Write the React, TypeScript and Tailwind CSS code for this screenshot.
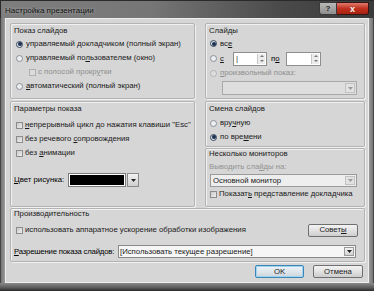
import React from "react";

function Radio({ checked, disabled, children, className = "" }: { checked?: boolean; disabled?: boolean; children?: React.ReactNode; className?: string }) {
  return (
    <div className={"flex items-center gap-[3px] whitespace-nowrap " + className}>
      <span
        className={
          "w-[7px] h-[7px] rounded-full border flex items-center justify-center shrink-0 " +
          (disabled ? "border-[#b4b4b4] bg-[#dedede]" : checked ? "border-[#3b4a5e] bg-[#d9e2ec]" : "border-[#8a8f96] bg-[#eceff2]")
        }
      >
        {checked && <span className="w-[4px] h-[4px] rounded-full bg-[#1c2f4e]" />}
      </span>
      <span className={disabled ? "text-[#8e8e8e]" : "text-[#1a1a1a]"}>{children}</span>
    </div>
  );
}

function Check({ disabled, children, className = "" }: { disabled?: boolean; children?: React.ReactNode; className?: string }) {
  return (
    <div className={"flex items-center gap-[2px] whitespace-nowrap " + className}>
      <span
        className={
          "w-[7px] h-[7px] border shrink-0 " +
          (disabled ? "border-[#b0b0b0] bg-[#dcdcdc]" : "border-[#8c8c8c] bg-[linear-gradient(135deg,#c9c9c9,#eeeeee)]")
        }
      />
      <span className={disabled ? "text-[#8e8e8e]" : "text-[#1a1a1a]"}>{children}</span>
    </div>
  );
}

function Arrow({ color = "#222" }: { color?: string }) {
  return (
    <svg width="5" height="3" viewBox="0 0 5 3">
      <path d="M0 0 H5 L2.5 3 Z" fill={color} />
    </svg>
  );
}

function DropBtn({ disabled }: { disabled?: boolean }) {
  return (
    <span
      className={
        "w-[10px] self-stretch m-[1px] flex items-center justify-center border " +
        (disabled ? "border-[#c2c2c2] bg-[#e2e2e2]" : "border-[#9a9a9a] bg-[linear-gradient(#f2f2f2,#d2d2d2)]")
      }
    >
      <Arrow color={disabled ? "#9a9a9a" : "#222"} />
    </span>
  );
}

function Spin() {
  return (
    <span className="w-[8px] self-stretch my-[1px] mr-[1px] flex flex-col border-l border-[#c8c8c8] bg-[#ececec]">
      <span className="flex-1 flex items-center justify-center">
        <svg width="4" height="2" viewBox="0 0 4 2">
          <path d="M0 2 H4 L2 0 Z" fill="#777" />
        </svg>
      </span>
      <span className="flex-1 flex items-center justify-center">
        <svg width="4" height="2" viewBox="0 0 4 2">
          <path d="M0 0 H4 L2 2 Z" fill="#777" />
        </svg>
      </span>
    </span>
  );
}

function Group({ title, className = "", children }: { title: string; className?: string; children?: React.ReactNode }) {
  return (
    <div className={"rounded-[2px] border border-[#b3b3b3] shadow-[inset_1px_1px_0_#f1f1f1,1px_1px_0_#f1f1f1] flex flex-col " + className}>
      <div className="pl-[3px] text-[#1a1a1a] whitespace-nowrap">{title}</div>
      {children}
    </div>
  );
}

export default function App() {
  return (
    <div className="w-[374px] h-[291px] overflow-hidden flex flex-col bg-[#6c6c6c] font-['Liberation_Sans',Arial,sans-serif] text-[7.75px] leading-[10px]">
      {/* title bar */}
      <div className="h-[18px] shrink-0 flex items-start bg-[linear-gradient(90deg,#7e7e7e,#767676_40%,#4a4a4a_75%,#3a3a3a)] border-t border-l border-[#2a2a2a]">
        <div className="pl-[4px] pt-[4px] text-[8px] leading-[11px] text-[#101010] whitespace-nowrap [text-shadow:0_0_3px_#bdbdbd]">Настройка презентации</div>
        <div className="ml-auto mr-[5px] mt-[1px] flex h-[13px]">
          <div className="w-[18px] h-full rounded-bl-[3px] border border-[#3a3a3a] bg-[linear-gradient(#b8b8b8,#8e8e8e)] flex items-center justify-center text-[8px] font-bold text-[#1e1e1e]">?</div>
          <div className="w-[32px] h-full rounded-br-[3px] border border-l-0 border-[#3a1414] bg-[linear-gradient(#e07a6c,#c2301f_50%,#a8220f)] flex items-center justify-center text-[9px] font-bold text-[#f4f4f4]">x</div>
        </div>
      </div>
      {/* body */}
      <div className="flex flex-1 min-h-0">
        <div className="w-[5px] shrink-0 bg-[linear-gradient(90deg,#2a2a2a,#7a7a7a_30%,#9a9a9a)]" />
        <div className="flex-1 flex flex-col border border-[#eeeeee] bg-[#d6d6d6] pt-[4px] pl-[4px] pr-[3px]">
          {/* row 1 */}
          <div className="flex gap-[10px] h-[76px]">
            <Group title="Показ слайдов" className="w-[185px] pt-[2px]">
              <div className="pl-[5px] mt-[1px] flex flex-col">
                <Radio checked className="h-[14px]">управляемый <u>д</u>окладчиком (полный экран)</Radio>
                <Radio className="h-[14px]">управляемый по<u>л</u>ьзователем (окно)</Radio>
                <Check disabled className="h-[14px] pl-[13px]">с полосой прокр<u>у</u>тки</Check>
                <Radio className="h-[14px]"><u>а</u>втоматический (полный экран)</Radio>
              </div>
            </Group>
            <Group title="Слайды" className="w-[160px] pt-[2px]">
              <div className="pl-[4px] mt-[1px] flex flex-col">
                <Radio checked className="h-[13px]">вс<u>е</u></Radio>
                <div className="flex items-center h-[15px] mt-[1px]">
                  <Radio className="w-[23px]"><u>с</u></Radio>
                  <span className="w-[34px] h-[14px] flex items-center bg-white border border-[#8e8e8e]">
                    <span className="flex-1 pl-[2px] text-[#333]">|</span>
                    <Spin />
                  </span>
                  <span className="ml-[4px] w-[15px]">п<u>о</u></span>
                  <span className="w-[35px] h-[14px] flex items-center bg-white border border-[#8e8e8e]">
                    <span className="flex-1" />
                    <Spin />
                  </span>
                </div>
                <Radio disabled className="h-[14px]"><u>п</u>роизвольный показ:</Radio>
                <div className="ml-[12px] mt-[1px] w-[135px] h-[14px] flex border border-[#a9a9a9] bg-[#dedede]">
                  <span className="flex-1" />
                  <DropBtn disabled />
                </div>
              </div>
            </Group>
          </div>
          {/* row 2 */}
          <div className="flex gap-[10px] h-[106px] mt-[2px]">
            <Group title="Параметры показа" className="w-[185px] pt-[2px]">
              <div className="pl-[5px] mt-[4px] flex flex-col">
                <Check className="h-[14px]"><u>н</u>епрерывный цикл до нажатия клавиши "Esc"</Check>
                <Check className="h-[14px]">без речевого <u>с</u>опровождения</Check>
                <Check className="h-[14px]">без <u>а</u>нимации</Check>
              </div>
              <div className="flex items-center pl-[3px] mt-[13px] h-[14px]">
                <span className="w-[54px] whitespace-nowrap"><u>Ц</u>вет рисунка:</span>
                <span className="w-[58px] h-[14px] border border-[#7c7c7c] bg-white p-[1px] flex">
                  <span className="flex-1 bg-black" />
                </span>
                <span className="ml-[1px] w-[12px] h-[14px] flex border border-[#8a8a8a] bg-[linear-gradient(#f2f2f2,#cfcfcf)] items-center justify-center">
                  <Arrow />
                </span>
              </div>
            </Group>
            <div className="w-[160px] flex flex-col gap-[1px]">
              <Group title="Смена слайдов" className="h-[46px] pt-[2px]">
                <div className="pl-[4px] mt-[2px] flex flex-col">
                  <Radio className="h-[14px]">вру<u>ч</u>ную</Radio>
                  <Radio checked className="h-[14px]">по вре<u>м</u>ени</Radio>
                </div>
              </Group>
              <Group title="Несколько мониторов" className="flex-1">
                <div className="pl-[3px] mt-[3px] h-[12px] text-[#929292] whitespace-nowrap">Выводить сла<u>й</u>ды на:</div>
                <div className="ml-[4px] w-[147px] h-[13px] flex border border-[#9a9a9a] bg-[#eeeeee]">
                  <span className="flex-1 pl-[2px] leading-[11px] text-[#1a1a1a] whitespace-nowrap">Основной монитор</span>
                  <DropBtn disabled />
                </div>
                <Check className="h-[12px] pl-[4px] mt-[1px]">Показат<u>ь</u> представление докладчика</Check>
              </Group>
            </div>
          </div>
          {/* row 3 */}
          <Group title="Производительность" className="h-[54px] mt-[1px] w-[355px]">
            <div className="flex items-center h-[14px] mt-[4px] pl-[5px] pr-[6px]">
              <Check className="flex-1">использовать аппаратное ускорение обработки изображения</Check>
              <span className="w-[50px] h-[13px] flex items-center justify-center rounded-[2px] border border-[#6f6f6f] bg-[linear-gradient(#f3f3f3,#e2e2e2_50%,#cdcdcd)] text-[#1a1a1a]">Совет<u>ы</u></span>
            </div>
            <div className="flex items-center h-[13px] mt-[8px] pl-[3px]">
              <span className="w-[104px] whitespace-nowrap tracking-[-0.2px]"><u>Р</u>азрешение показа слайдов:</span>
              <span className="w-[238px] h-[13px] flex border border-[#8a8a8a] bg-[#f6f6f6]">
                <span className="flex-1 pl-[1px] leading-[11px] text-[#1a1a1a] whitespace-nowrap">[Использовать текущее разрешение]</span>
                <DropBtn />
              </span>
            </div>
          </Group>
          {/* buttons */}
          <div className="flex justify-end gap-[9px] mt-[3px] pr-[2px]">
            <span className="w-[49px] h-[13px] flex items-center justify-center rounded-[2px] border border-[#3a86b8] shadow-[inset_0_0_0_1px_#9fd3f0] bg-[linear-gradient(#eef4f8,#dfe6eb_50%,#cbd5dc)] text-[#1a1a1a]">OK</span>
            <span className="w-[50px] h-[13px] flex items-center justify-center rounded-[2px] border border-[#707070] bg-[linear-gradient(#f3f3f3,#e2e2e2_50%,#cdcdcd)] text-[#1a1a1a]">Отмена</span>
          </div>
        </div>
        <div className="w-[5px] shrink-0 bg-[linear-gradient(90deg,#9a9a9a,#7a7a7a_70%,#2a2a2a)]" />
      </div>
      <div className="h-[8px] shrink-0 bg-[linear-gradient(#8a8a8a,#5a5a5a_60%,#2a2a2a)]" />
    </div>
  );
}
